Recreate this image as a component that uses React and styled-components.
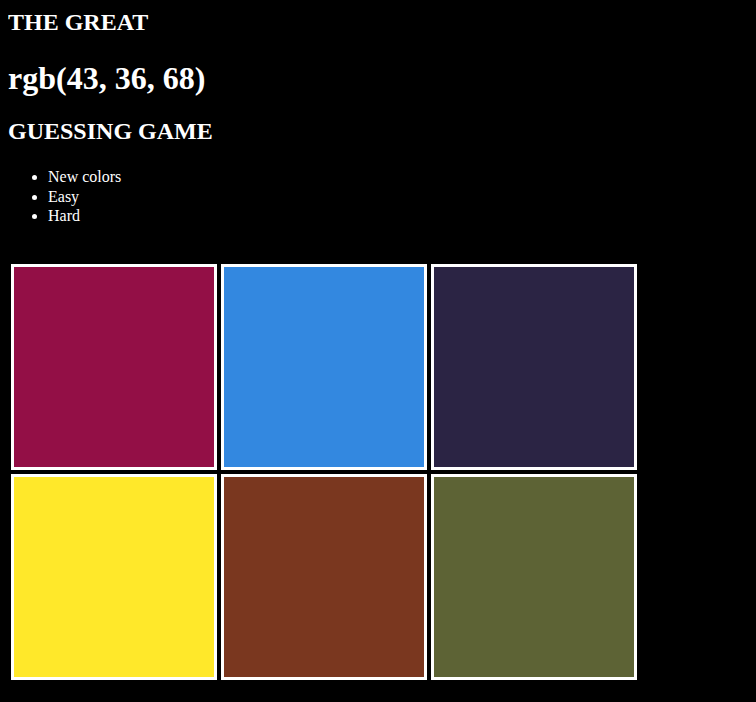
import React from 'react';
import styled, { createGlobalStyle } from 'styled-components';

const GlobalStyle = createGlobalStyle`
  body {
    margin: 8px;
    background: #000;
    color: #fff;
    font-family: "Liberation Serif", "Times New Roman", serif;
  }
`;

const Header = styled.header`
  display: block;
`;

const Subtitle = styled.h2`
  font-size: 24px;
  font-weight: bold;
  margin: ${(props) => (props.first ? '0 0 20px' : '20px 0')};
  padding-top: ${(props) => (props.first ? '1px' : '0')};
`;

const Target = styled.h1`
  font-size: 32px;
  font-weight: bold;
  margin: 24px 0 21px;
`;

const Menu = styled.ul`
  margin: 22px 0 16px;
  padding-left: 40px;
  font-size: 16px;
  line-height: 19.5px;
`;

const Board = styled.div`
  display: grid;
  grid-template-columns: repeat(3, 206px);
  gap: 4px;
  margin: 38px 0 0 3px;
`;

const Square = styled.div`
  width: 200px;
  height: 200px;
  border: 3px solid #fff;
  background: ${(props) => props.color};
`;

const colors = [
  'rgb(147, 15, 70)',
  'rgb(51, 136, 224)',
  'rgb(43, 36, 68)',
  'rgb(255, 232, 42)',
  'rgb(122, 55, 31)',
  'rgb(93, 99, 53)',
];

const App = () => (
  <>
    <GlobalStyle />
    <Header>
      <Subtitle first>THE GREAT</Subtitle>
      <Target>rgb(43, 36, 68)</Target>
      <Subtitle>GUESSING GAME</Subtitle>
    </Header>
    <Menu>
      <li>New colors</li>
      <li>Easy</li>
      <li>Hard</li>
    </Menu>
    <Board>
      {colors.map((c) => (
        <Square key={c} color={c} />
      ))}
    </Board>
  </>
);

export default App;
